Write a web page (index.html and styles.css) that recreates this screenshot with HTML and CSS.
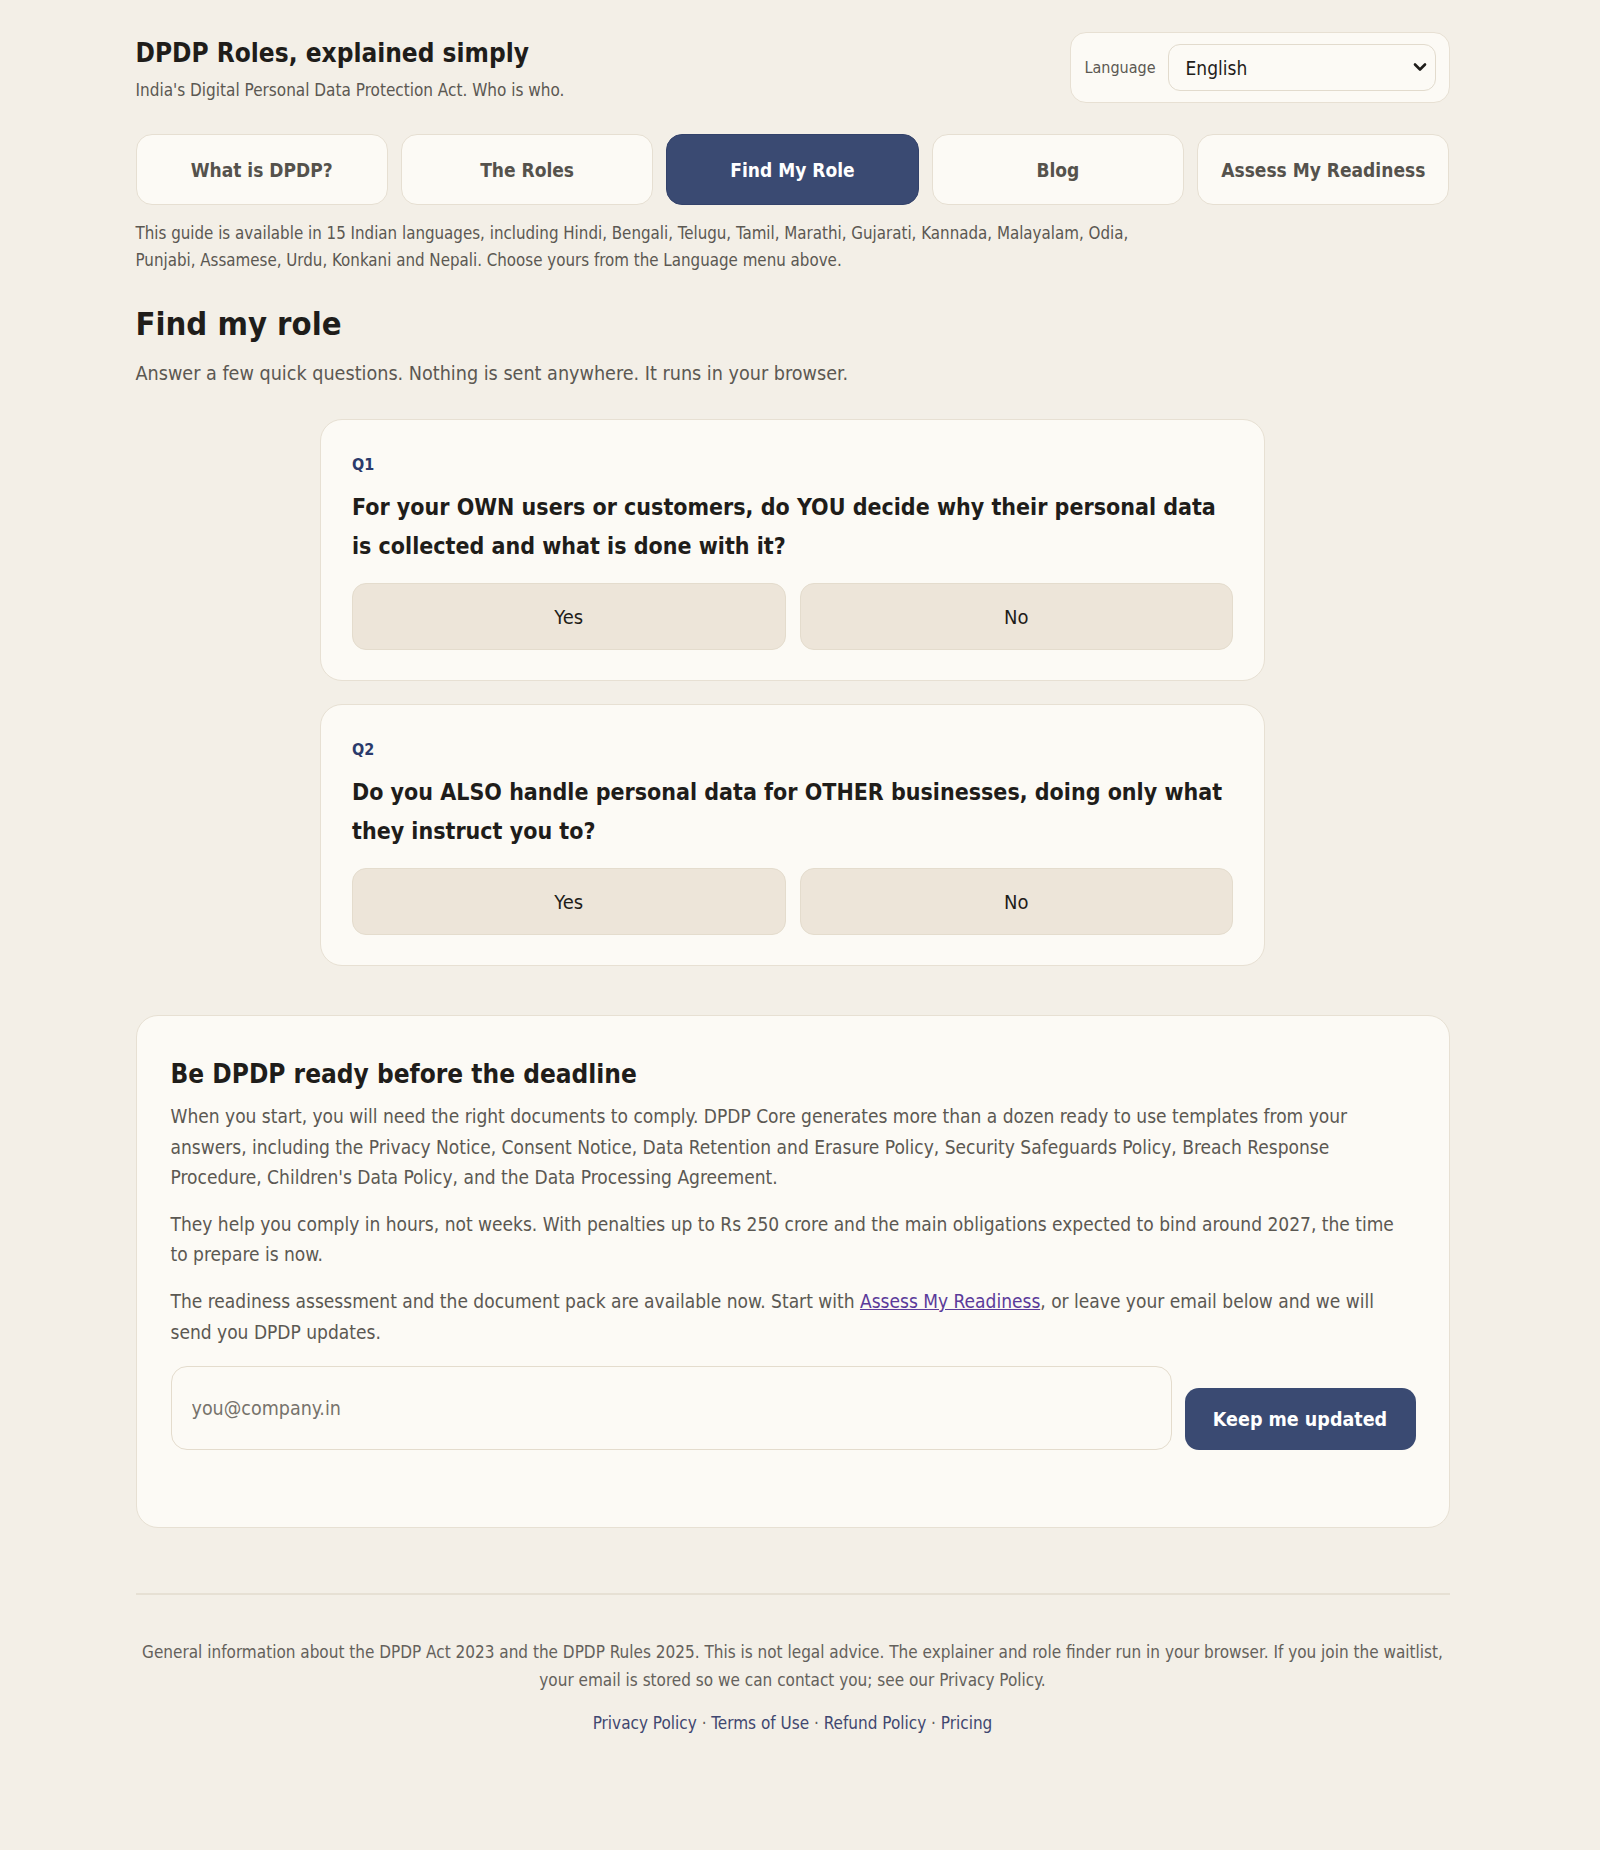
FILE: index.html
```html
<!DOCTYPE html>
<html lang="en">
<head>
    <meta charset="UTF-8">
    <meta name="viewport" content="width=device-width, initial-scale=1.0">
    <title>DPDP Roles, explained simply</title>
    <link rel="stylesheet" href="styles.css">
</head>
<body>

    <div class="page">
        <header class="top">
            <div class="brand">
                <h1>DPDP Roles, explained simply</h1>
                <p class="tagline">India's Digital Personal Data Protection Act. Who is who.</p>
            </div>
            <label class="lang-box">
                <span class="lang-label">Language</span>
                <span class="select-wrap">
                    <select class="lang-select">
                        <option>English</option>
                        <option>हिन्दी</option>
                        <option>বাংলা</option>
                    </select>
                    <svg class="chevron" width="14" height="10" viewBox="0 0 14 10" aria-hidden="true">
                        <path d="M2 2.5 L7 7.5 L12 2.5" fill="none" stroke="#1f1d1a" stroke-width="2.6" stroke-linecap="round" stroke-linejoin="round"/>
                    </svg>
                </span>
            </label>
        </header>

        <nav class="tabs">
            <button class="tab">What is DPDP?</button>
            <button class="tab">The Roles</button>
            <button class="tab active">Find My Role</button>
            <button class="tab">Blog</button>
            <button class="tab">Assess My Readiness</button>
        </nav>

        <p class="lang-note">This guide is available in 15 Indian languages, including Hindi, Bengali, Telugu, Tamil, Marathi, Gujarati, Kannada, Malayalam, Odia, Punjabi, Assamese, Urdu, Konkani and Nepali. Choose yours from the Language menu above.</p>

        <section class="finder">
            <h2>Find my role</h2>
            <p class="lead">Answer a few quick questions. Nothing is sent anywhere. It runs in your browser.</p>

            <div class="question">
                <div class="q-num">Q1</div>
                <p class="q-text">For your OWN users or customers, do YOU decide why their personal data is collected and what is done with it?</p>
                <div class="answers">
                    <button class="answer">Yes</button>
                    <button class="answer">No</button>
                </div>
            </div>

            <div class="question">
                <div class="q-num">Q2</div>
                <p class="q-text">Do you ALSO handle personal data for OTHER businesses, doing only what they instruct you to?</p>
                <div class="answers">
                    <button class="answer">Yes</button>
                    <button class="answer">No</button>
                </div>
            </div>
        </section>

        <section class="promo">
            <h3>Be DPDP ready before the deadline</h3>
            <p>When you start, you will need the right documents to comply. DPDP Core generates more than a dozen ready to use templates from your answers, including the Privacy Notice, Consent Notice, Data Retention and Erasure Policy, Security Safeguards Policy, Breach Response Procedure, Children's Data Policy, and the Data Processing Agreement.</p>
            <p>They help you comply in hours, not weeks. With penalties up to Rs 250 crore and the main obligations expected to bind around 2027, the time to prepare is now.</p>
            <p>The readiness assessment and the document pack are available now. Start with <a href="#" class="inline-link">Assess My Readiness</a>, or leave your email below and we will send you DPDP updates.</p>
            <form class="signup" onsubmit="return false">
                <input type="email" class="email" placeholder="you@company.in">
                <button type="submit" class="signup-btn">Keep me updated</button>
            </form>
        </section>

        <footer class="foot">
            <p>General information about the DPDP Act 2023 and the DPDP Rules 2025. This is not legal advice. The explainer and role finder run in your browser. If you join the waitlist, your email is stored so we can contact you; see our Privacy Policy.</p>
            <p class="foot-links">
                <a href="#">Privacy Policy</a> · <a href="#">Terms of Use</a> · <a href="#">Refund Policy</a> · <a href="#">Pricing</a>
            </p>
        </footer>
    </div>

</body>
</html>
```

FILE: styles.css
```css
* {
    margin: 0;
    padding: 0;
    box-sizing: border-box;
}

body {
    padding-right: 15px;
    background-color: #f3efe7;
    color: #1f1d1a;
    font-family: "DejaVu Sans Condensed", "Liberation Sans", sans-serif;
}

.page {
    width: 1314px;
    margin: 0 auto;
    padding: 32px 0 120px;
}

/* header */
.top {
    display: flex;
    justify-content: space-between;
    align-items: flex-start;
}

.brand h1 {
    font-size: 26px;
    font-weight: 700;
    margin-top: 6px;
}

.tagline {
    margin-top: 12px;
    font-size: 17px;
    color: #5b5852;
}

.lang-box {
    display: flex;
    align-items: center;
    gap: 12px;
    width: 380px;
    height: 71px;
    padding: 0 13px 0 14px;
    background: #fcfaf5;
    border: 1px solid #e7e0d3;
    border-radius: 16px;
}

.lang-label {
    font-size: 16px;
    color: #5b5852;
}

.select-wrap {
    position: relative;
    flex: 1;
    display: flex;
}

.lang-select {
    appearance: none;
    -webkit-appearance: none;
    width: 100%;
    height: 47px;
    padding: 0 14px 0 17px;
    font-family: inherit;
    font-size: 19px;
    color: #1f1d1a;
    background: #fcfaf5;
    border: 1px solid #e2dbcd;
    border-radius: 12px;
}

.chevron {
    position: absolute;
    right: 9px;
    top: 18px;
    pointer-events: none;
}

/* tabs */
.tabs {
    display: grid;
    grid-template-columns: repeat(5, 1fr);
    gap: 13px;
    margin-top: 31px;
}

.tab {
    height: 71px;
    font-family: inherit;
    font-size: 19px;
    font-weight: 700;
    color: #55524c;
    background: #fcfaf5;
    border: 1px solid #e6dfd2;
    border-radius: 16px;
    cursor: pointer;
}

.tab.active {
    background: #3a4a72;
    border-color: #33426a;
    color: #fff;
}

.lang-note {
    max-width: 1010px;
    margin-top: 15px;
    font-size: 16.8px;
    line-height: 27px;
    color: #5b5852;
}

/* role finder */
.finder h2 {
    margin-top: 31px;
    font-size: 32.5px;
    font-weight: 700;
}

.lead {
    margin-top: 19px;
    font-size: 19.6px;
    color: #5b5852;
}

.question {
    width: 945px;
    margin: 34px auto 0;
    padding: 35px 31px 30px;
    background: #fcfaf5;
    border: 1px solid #e7e0d3;
    border-radius: 22px;
}

.question + .question {
    margin-top: 23px;
}

.q-num {
    font-size: 16px;
    font-weight: 700;
    color: #2b3a6b;
}

.q-text {
    margin-top: 14px;
    font-size: 23px;
    font-weight: 700;
    line-height: 39px;
    color: #1f1d1a;
}

.answers {
    display: grid;
    grid-template-columns: 1fr 1fr;
    gap: 14px;
    margin-top: 17px;
}

.answer {
    height: 67px;
    font-family: inherit;
    font-size: 20px;
    color: #1f1d1a;
    background: #ede5d9;
    border: 1px solid #e4dccd;
    border-radius: 14px;
    cursor: pointer;
}

/* waitlist card */
.promo {
    margin-top: 49px;
    padding: 40px 33px 77px 34px;
    background: #fcfaf5;
    border: 1px solid #e7e0d3;
    border-radius: 22px;
}

.promo h3 {
    font-size: 26px;
    font-weight: 700;
    line-height: 36px;
}

.promo p {
    margin-top: 16px;
    font-size: 19px;
    line-height: 30.6px;
    color: #5b5852;
}

.promo h3 + p {
    margin-top: 9px;
}

.inline-link {
    color: #5b3a9a;
}

.signup {
    display: flex;
    align-items: flex-end;
    gap: 13px;
    margin-top: 19px;
}

.email {
    flex: 1;
    height: 84px;
    padding: 0 20px;
    font-family: inherit;
    font-size: 19.5px;
    background: #fcfaf5;
    border: 1px solid #e4dccd;
    border-radius: 16px;
}

.email::placeholder {
    color: #76726b;
}

.signup-btn {
    width: 231px;
    height: 62px;
    font-family: inherit;
    font-size: 19.5px;
    font-weight: 700;
    color: #fff;
    background: #3a4a72;
    border: none;
    border-radius: 14px;
    cursor: pointer;
}

/* footer */
.foot {
    margin-top: 65px;
    padding-top: 43px;
    border-top: 2px solid #e6e0d4;
    text-align: center;
    font-size: 17px;
    line-height: 28px;
    color: #64615b;
}

.foot-links {
    margin-top: 15px;
}

.foot-links a {
    color: #3f4770;
    text-decoration: none;
}
```
